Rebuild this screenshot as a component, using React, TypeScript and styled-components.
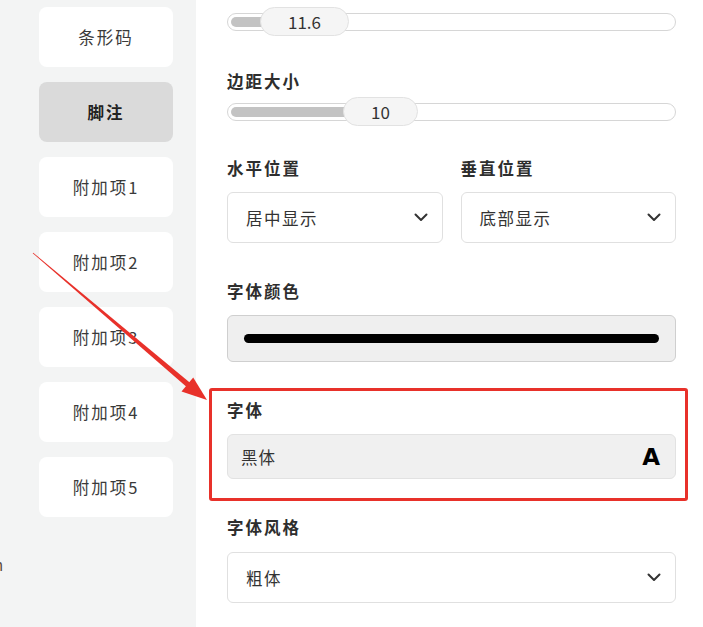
import styled, { createGlobalStyle } from "styled-components";

const GlobalStyle = createGlobalStyle`
  html, body {
    margin: 0;
    padding: 0;
    overflow: hidden;
    background: #ffffff;
  }
  body {
    font-family: "Noto Sans CJK SC", "Noto Sans", sans-serif;
    color: #333333;
  }
`;

const navItems = ["条形码", "脚注", "附加项1", "附加项2", "附加项3", "附加项4", "附加项5"];

interface NavButtonProps {
  $active?: boolean;
}

const Chevron = () => (
  <svg width="14" height="9" viewBox="0 0 14 9">
    <polyline points="1.5,1.5 7,7 12.5,1.5" fill="none" stroke="#333" strokeWidth="2" strokeLinecap="round" strokeLinejoin="round" />
  </svg>
);

const Slider = ({ value, thumbLeft }: { value: string; thumbLeft: number }) => (
  <SliderRow>
    <Track>
      <Fill style={{ width: thumbLeft + 8 }} />
    </Track>
    <Thumb style={{ left: thumbLeft }}>{value}</Thumb>
  </SliderRow>
);

const Select = ({ value }: { value: string }) => (
  <SelectBox>
    <span>{value}</span>
    <Chevron />
  </SelectBox>
);

const App = () => {
  return (
    <Page>
      <GlobalStyle />
      <Sidebar>
        {navItems.map((item) => (
          <NavButton key={item} $active={item === "脚注"}>
            {item}
          </NavButton>
        ))}
        <Clipped>n</Clipped>
      </Sidebar>

      <Panel>
        <Slider value="11.6" thumbLeft={33} />

        <Section $top={32}>
          <Label $gap={4}>边距大小</Label>
          <Slider value="10" thumbLeft={116} />
        </Section>

        <TwoCols $top={29}>
          <Col>
            <Label>水平位置</Label>
            <Select value="居中显示" />
          </Col>
          <Col>
            <Label>垂直位置</Label>
            <Select value="底部显示" />
          </Col>
        </TwoCols>

        <Section $top={36}>
          <Label>字体颜色</Label>
          <ColorBox>
            <ColorBar />
          </ColorBox>
        </Section>

        <Section $top={36}>
          <Label>字体</Label>
          <FontBox>
            <span>黑体</span>
            <FontGlyph>A</FontGlyph>
          </FontBox>
          <Highlight />
        </Section>

        <Section $top={36}>
          <Label $gap={13}>字体风格</Label>
          <Select value="粗体" />
        </Section>
      </Panel>

      <Arrow width="703" height="627" viewBox="0 0 703 627">
        <polygon points="32.7,253.2 186.4,386.7 190,382.7 33.3,252.8" fill="#e8312a" />
        <polygon points="207,400 181.5,391.4 193.2,377.6" fill="#e8312a" />
      </Arrow>
    </Page>
  );
};

const Page = styled.div`
  position: relative;
  display: flex;
  width: 703px;
  height: 627px;
  overflow: hidden;
`;

const Sidebar = styled.div`
  width: 196px;
  flex-shrink: 0;
  box-sizing: border-box;
  background: #f3f4f4;
  padding: 7px 0 0 39px;
  display: flex;
  flex-direction: column;
  gap: 15px;
`;

const NavButton = styled.div<NavButtonProps>`
  width: 134px;
  height: 60px;
  border-radius: 8px;
  background: ${(p) => (p.$active ? "#dadada" : "#ffffff")};
  display: flex;
  align-items: center;
  justify-content: center;
  font-size: 16.5px;
  letter-spacing: 2px;
  font-weight: ${(p) => (p.$active ? 700 : 400)};
  color: ${(p) => (p.$active ? "#222" : "#3a3a3a")};
`;

const Clipped = styled.div`
  margin: 22px 0 0 -45px;
  font-size: 15px;
  color: #5a4a3a;
`;

const Panel = styled.div`
  flex: 1;
  box-sizing: border-box;
  padding: 7px 27px 0 31px;
  display: flex;
  flex-direction: column;
`;

const Section = styled.div<{ $top?: number }>`
  position: relative;
  display: flex;
  flex-direction: column;
  margin-top: ${(p) => p.$top ?? 0}px;
`;

const TwoCols = styled.div<{ $top?: number }>`
  display: flex;
  gap: 18px;
  margin-top: ${(p) => p.$top ?? 0}px;
`;

const Col = styled.div`
  flex: 1;
  display: flex;
  flex-direction: column;
`;

const Label = styled.div<{ $gap?: number }>`
  height: 24px;
  line-height: 24px;
  font-size: 16.5px;
  font-weight: 700;
  letter-spacing: 2px;
  color: #2e2e2e;
  margin-bottom: ${(p) => p.$gap ?? 12}px;
`;

const SliderRow = styled.div`
  position: relative;
  height: 30px;
  display: flex;
  align-items: center;
`;

const Track = styled.div`
  width: 100%;
  height: 18px;
  box-sizing: border-box;
  border: 1px solid #d6d6d6;
  border-radius: 9px;
  padding: 3px;
  background: #fff;
`;

const Fill = styled.div`
  height: 10px;
  border-radius: 5px;
  background: #c3c3c3;
`;

const Thumb = styled.div`
  position: absolute;
  top: 0;
  height: 29px;
  box-sizing: border-box;
  padding: 0 27px;
  border: 1px solid #e2e2e2;
  border-radius: 15px;
  background: #f5f5f5;
  display: flex;
  align-items: center;
  font-size: 17px;
  color: #333;
`;

const SelectBox = styled.div`
  height: 51px;
  box-sizing: border-box;
  border: 1px solid #e0e0e0;
  border-radius: 6px;
  background: #fff;
  padding: 0 14px 0 18px;
  display: flex;
  align-items: center;
  justify-content: space-between;
  font-size: 16.5px;
  letter-spacing: 1.5px;
  color: #333;
`;

const ColorBox = styled.div`
  height: 47px;
  box-sizing: border-box;
  border: 1px solid #cfcfcf;
  border-radius: 6px;
  background: #efefef;
  padding: 0 16px;
  display: flex;
  align-items: center;
`;

const ColorBar = styled.div`
  flex: 1;
  height: 9px;
  border-radius: 5px;
  background: #000;
`;

const FontBox = styled.div`
  height: 45px;
  box-sizing: border-box;
  border: 1px solid #e2e2e2;
  border-radius: 6px;
  background: #f0f0f0;
  padding: 0 14px 0 13px;
  display: flex;
  align-items: center;
  justify-content: space-between;
  font-size: 16.5px;
  letter-spacing: 1px;
  color: #333;
`;

const FontGlyph = styled.span`
  font-family: "DejaVu Sans", "Liberation Sans", sans-serif;
  font-weight: 700;
  font-size: 23px;
  color: #000;
`;

const Highlight = styled.div`
  position: absolute;
  top: -10px;
  left: -18px;
  right: -12px;
  bottom: -22px;
  border: 3px solid #e8312a;
  border-radius: 3px;
  pointer-events: none;
`;

const Arrow = styled.svg`
  position: absolute;
  top: 0;
  left: 0;
  pointer-events: none;
`;

export default App;
